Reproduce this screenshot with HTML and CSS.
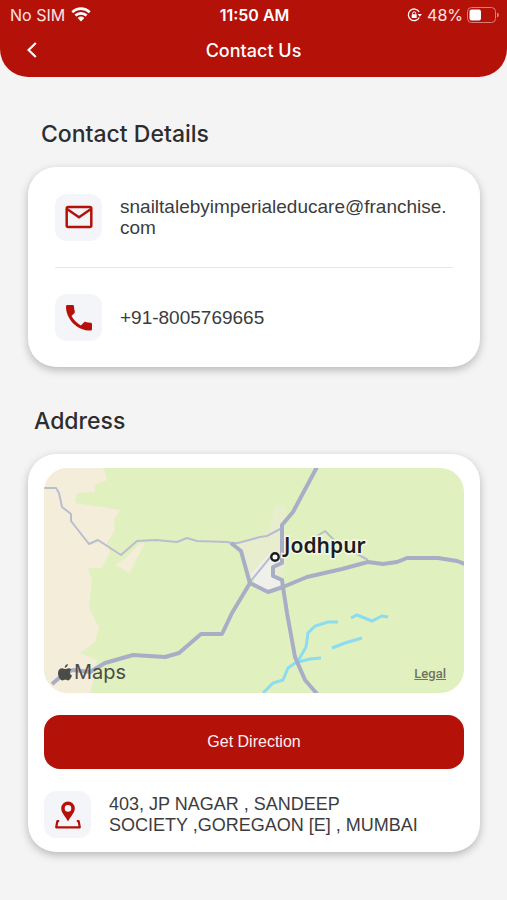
FILE: index.html
```html
<!DOCTYPE html>
<html lang="en">

<head>
    <meta charset="UTF-8">
    <meta name="viewport" content="width=device-width, initial-scale=1.0">
    <title>Contact Us</title>
    <link rel="stylesheet" href="styles.css">
</head>

<body>

    <!-- Header -->
    <header class="header">
        <div class="status-bar">
            <div class="status-left">
                <span>No SIM</span>
                <svg class="wifi" viewBox="0 0 20 15" aria-hidden="true">
                    <path d="M1.300 5.200a12.600 12.600 0 0 1 17.400 0M4.400 8.500a8.200 8.200 0 0 1 11.200 0" fill="none" stroke="#fff" stroke-width="2.700"/>
                    <path d="M6.700 11a5 5 0 0 1 6.600 0L10 14.500z" fill="#fff"/>
                </svg>
            </div>
            <span class="time">11:50 AM</span>
            <div class="status-right">
                <svg class="lock" viewBox="0 0 16 14" aria-hidden="true">
                    <path d="M12.100 3.800A5.800 5.800 0 1 0 12.300 9.500" fill="none" stroke="#fff" stroke-width="1.300"/>
                    <path d="M10.700 6h4.200l-2.100 2.800z" fill="#fff"/>
                    <rect x="4.700" y="6.200" width="5" height="3.800" rx=".6" fill="#fff"/>
                    <path d="M5.700 6.500V5.300a1.500 1.500 0 0 1 3 0v1.200" fill="none" stroke="#fff"/>
                </svg>
                <span>48%</span>
                <svg class="battery" viewBox="0 0 32 16" aria-hidden="true">
                    <rect x=".5" y=".5" width="28" height="15" rx="4" fill="none" stroke="#dc7f79"/>
                    <rect x="2.500" y="2.500" width="11.500" height="11" rx="2" fill="#fff"/>
                    <path d="M30 5.500q2 .8 2 2.500t-2 2.500z" fill="#dc7f79"/>
                </svg>
            </div>
        </div>
        <div class="title-bar">
            <a class="back" href="#" aria-label="Back">
                <svg viewBox="0 0 10 16" aria-hidden="true">
                    <path d="M8.800 1L1.600 8l7.200 7" fill="none" stroke="#fff" stroke-width="2.200"/>
                </svg>
            </a>
            <h1>Contact Us</h1>
        </div>
    </header>

    <main class="main-content">

        <!-- Contact details -->
        <h2 class="contact-title">Contact Details</h2>
        <section class="card contact-card">
            <div class="row">
                <span class="icon-box">
                    <svg viewBox="0 0 32 32" aria-hidden="true">
                        <rect x="3.700" y="6" width="24.600" height="20" rx="1.500" fill="none" stroke="#b41109" stroke-width="2.500"/>
                        <path d="M4 8l12 8.200L28 8" fill="none" stroke="#b41109" stroke-width="2.500"/>
                    </svg>
                </span>
                <p>snailtalebyimperialeducare@franchise.<wbr>com</p>
            </div>
            <div class="row">
                <span class="icon-box">
                    <svg viewBox="0 0 32 32" aria-hidden="true">
                        <path d="M4.400 3h5.200c.8 0 1.400.6 1.400 1.400 0 1.800.3 3.500.8 5 .2.6.1 1.100-.3 1.500l-3 3.200c2 4 5.300 7.200 9.400 9.300l3.200-3.200c.4-.4 1-.5 1.500-.3 1.600.5 3.300.8 5 .8.800 0 1.400.6 1.400 1.400v5.100c0 .8-.6 1.400-1.400 1.400C14.300 28.600 3 17.400 3 4.400 3 3.600 3.600 3 4.400 3z" fill="#b41109"/>
                    </svg>
                </span>
                <p>+91-8005769665</p>
            </div>
        </section>

        <!-- Address -->
        <h2 class="address-title">Address</h2>
        <section class="card address-card">
            <div class="map">
                <svg class="map-drawing" viewBox="0 0 420 225" role="img" aria-label="Map of Jodhpur">
                    <rect width="420" height="225" fill="#e1f0bf"/>
                    <!-- dry land -->
                    <g fill="#f4edd9">
                        <path d="M0 0h60l3 12-12 5v7l-18 1-2 10 20 3 25 4-6 10 1 10-8 13 3 9-8 16H44l4 12-3 27 10 21-4 14-15 11 17 7-5 27-2 6H0z"/>
                        <path d="M101 75l-8 15-7 15-15-8 12-8 11-12z"/>
                    </g>
                    <path d="M194 76l30-11 8-28 10 2-2 22 8 12-8 27-4 18-14 4-17-10-7-20z" fill="#e8eecd"/>
                    <path d="M207 106l18-20h12v12l-8 1v9l9 5-3 7-11 3-11-5z" fill="#f0f0ea"/>
                    <!-- water -->
                    <g fill="none" stroke="#8bdcf0" stroke-width="3">
                        <path d="M219 225l10-10 10-3 5-12 10-7 8-14 2-14 7-7 13-4 10 0"/>
                        <path d="M254 194l12-3 11-1M307 150l6-3 15 6 10-5 6 1"/>
                        <path d="M288 180l13-5 17-5"/>
                    </g>
                    <!-- roads -->
                    <g fill="none" stroke="#b9bdd0" stroke-width="2" stroke-linejoin="round">
                        <path d="M0 20h12l3 5 3 14 9 7v7l18 23 9-4 23 15 16-14 19-1 21 2 10-4 10 3 30 1 5 1h6l22-6 7-1 15-8"/>
                        <path d="M264 74l17-11 12 12 31 17M206 114l22-27"/>
                    </g>
                    <g fill="none" stroke="#a7aec5" stroke-width="4" stroke-linejoin="round">
                        <path d="M273-1l-24 45-11 13v38l-9 4v9l9 4 1 7 4 26 8 44 10 23 13 15"/>
                        <path d="M187 75l10 8 8 29 1 3 18 9 15-5 24-10 35-8 26-7 15 2 14-2 10-4h31l19 3 8 3"/>
                        <path d="M206 115l-18 30-10 21h-21l-22 19-14 4-32-2-28 8-15 9-17-2-8 3-13 11"/>
                    </g>
                    <circle cx="231" cy="89" r="3.700" fill="#fff" stroke="#1d1d1f" stroke-width="2.400"/>
                    <text class="city" x="240" y="85">Jodhpur</text>
                </svg>
                <div class="map-brand">
                    <svg viewBox="0 0 14 17" aria-hidden="true">
                        <path d="M9.900 0c.1 1.900-1.400 3.700-3.200 3.800C6.500 2 8.100.2 9.900 0zM13.500 5.800c-2.300 1.400-2 4.700.5 5.700-.6 1.800-2.100 4.800-3.700 4.900-1.100 0-1.500-.7-2.900-.7s-1.900.7-2.900.7C2.300 16.400 0 12.300 0 9.200c0-3.200 2-4.900 4.100-4.900 1.300 0 2.300.8 3.200.8.800 0 2.100-.9 3.500-.9 1.100 0 2.100.6 2.700 1.600z" fill="#4b4b47"/>
                    </svg>
                    <span>Maps</span>
                </div>
                <a class="legal" href="#">Legal</a>
            </div>
            <button class="direction-button" type="button">Get Direction</button>
            <div class="address-row">
                <span class="icon-box">
                    <svg viewBox="0 0 32 32" aria-hidden="true">
                        <path fill-rule="evenodd" d="M16 2.500a6.800 6.800 0 0 0-6.800 6.800c0 4.700 4.500 8.500 6.800 13.200 2.300-4.700 6.800-8.500 6.800-13.200A6.800 6.800 0 0 0 16 2.500zm0 3.600a3.300 3.300 0 1 1 0 6.600 3.300 3.300 0 0 1 0-6.600z" fill="#b41109"/>
                        <path d="M7.200 22H5.400L4.200 28.300h23.600L26.600 22h-1.800" fill="none" stroke="#b41109" stroke-width="2.200" stroke-linejoin="round"/>
                    </svg>
                </span>
                <address>403, JP NAGAR , SANDEEP<br>SOCIETY ,GOREGAON [E] , MUMBAI</address>
            </div>
        </section>
    </main>

</body>

</html>
```
FILE: styles.css
```css
* {
    margin: 0;
    padding: 0;
    box-sizing: border-box;
}

body {
    font-family: "Liberation Sans", Arial, sans-serif;
    background-color: #f4f4f4;
    color: #3c3c3e;
}

svg {
    display: block;
}

/* Header */
.header {
    background-color: #b41109;
    color: #fff;
    border-radius: 0 0 28px 28px;
    font-family: Inter, sans-serif;
    padding-bottom: 8px;
}

.status-bar {
    display: grid;
    grid-template-columns: 1fr auto 1fr;
    align-items: center;
    height: 29px;
    padding: 0 8px 0 10px;
    font-size: 16px;
}

.status-left,
.status-right {
    display: flex;
    align-items: center;
    gap: 6px;
    color: #ffe4e2;
}

.status-right {
    justify-content: flex-end;
    gap: 4px;
}

.time {
    font-weight: 600;
}

.wifi {
    width: 20px;
    height: 15px;
}

.lock {
    width: 16px;
    height: 14px;
}

.battery {
    width: 32px;
    height: 16px;
}

.title-bar {
    display: grid;
    grid-template-columns: 1fr auto 1fr;
    align-items: center;
    height: 40px;
    padding: 2px 27px 0;
}

.title-bar h1 {
    font-size: 18px;
    font-weight: 500;
}

.back {
    justify-self: start;
}

.back svg {
    width: 10px;
    height: 16px;
}

/* Main content */
.main-content {
    padding: 44px 27px 48px 28px;
}

.main-content h2 {
    font-family: Inter, sans-serif;
    font-size: 23px;
    font-weight: 500;
    line-height: 26px;
    color: #2d2d2f;
}

.main-content .contact-title {
    padding-left: 13px;
}

.main-content .address-title {
    padding-left: 6px;
    margin-top: 41px;
}

/* Cards */
.card {
    background-color: #fff;
    border-radius: 28px;
    margin-top: 20px;
    box-shadow: 0 3px 8px rgba(0, 0, 0, 0.25);
}

.contact-card {
    padding: 0 27px;
}

.row {
    display: flex;
    align-items: center;
    gap: 18px;
    height: 100px;
}

.row + .row {
    border-top: 1px solid #e6e6e6;
}

.row p,
.address-row address {
    flex: 1;
    font-size: 18px;
    font-style: normal;
    line-height: 21px;
}

.row p {
    font-size: 19px;
}

.icon-box {
    display: flex;
    align-items: center;
    justify-content: center;
    flex: none;
    width: 47px;
    height: 47px;
    border-radius: 12px;
    background-color: #f4f5f8;
}

.icon-box svg {
    width: 32px;
    height: 32px;
}

.address-card {
    padding: 14px 16px;
}

/* Map */
.map {
    position: relative;
    border-radius: 24px;
    overflow: hidden;
}

.map-drawing {
    width: 100%;
}

.city {
    font-family: "Noto Sans", sans-serif;
    font-size: 21px;
    font-weight: 600;
    fill: #1d1d1f;
    stroke: #f4f8e6;
    stroke-width: 3px;
    paint-order: stroke;
}

.map-brand {
    position: absolute;
    left: 14px;
    bottom: 9px;
    display: flex;
    align-items: center;
    gap: 2px;
    font-family: Inter, sans-serif;
    font-size: 20px;
    color: #4b4b47;
}

.map-brand svg {
    width: 14px;
    height: 17px;
}

.legal {
    position: absolute;
    right: 18px;
    bottom: 12px;
    font-family: Roboto, sans-serif;
    font-size: 13px;
    font-weight: 500;
    color: #6f755e;
}

.direction-button {
    display: block;
    width: 100%;
    height: 54px;
    margin-top: 22px;
    border: none;
    border-radius: 16px;
    background-color: #b41109;
    color: #fff0ef;
    font-family: "Liberation Sans", Arial, sans-serif;
    font-size: 16px;
    cursor: pointer;
}

.address-row {
    display: flex;
    align-items: center;
    gap: 18px;
    margin-top: 22px;
}
```
